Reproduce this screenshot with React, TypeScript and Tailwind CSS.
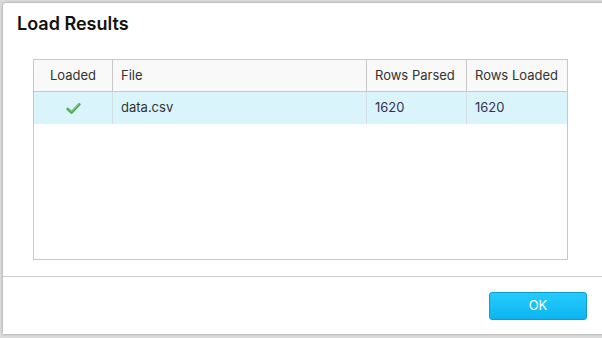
import React from "react";

export default function App() {
  return (
    <div className="w-[602px] h-[338px] bg-[#dcdcdc] pl-[3px] pt-[3px] overflow-hidden" style={{ fontFamily: "Inter, 'Noto Sans', sans-serif" }}>
      <div className="w-[620px] h-[331px] bg-white rounded-tl-[3px] flex flex-col shadow-[0_0_3px_rgba(0,0,0,0.35)]">
        <div className="h-[40px] pl-[14px] pt-[10px] text-[18px] font-semibold text-[#111] leading-[22px]">Load Results</div>
        <div className="pl-[30px] pt-[16px]">
          <div className="w-[535px] h-[201px] border border-[#c8c8c8] text-[13px] text-[#333]">
            <div className="flex h-[32px] bg-[#f9f9f9] border-b border-[#c8c8c8]">
              <div className="w-[79px] border-r border-[#c8c8c8] flex items-center justify-center">Loaded</div>
              <div className="w-[254px] border-r border-[#c8c8c8] flex items-center pl-[8px]">File</div>
              <div className="w-[100px] border-r border-[#c8c8c8] flex items-center pl-[8px]">Rows Parsed</div>
              <div className="flex-1 flex items-center pl-[8px]">Rows Loaded</div>
            </div>
            <div className="flex h-[32px] bg-[#d9f5fb]">
              <div className="w-[79px] border-r border-[#cfdfe3] flex items-center justify-center">
                <svg width="15" height="13" viewBox="0 0 15 13">
                  <path d="M1.8 7 L5.5 10.6 L13.2 2.4" fill="none" stroke="#55a855" strokeWidth="2.8" strokeLinejoin="round" strokeLinecap="round" />
                  <path d="M2.2 6.6 L5.5 9.8 L12.8 2.1" fill="none" stroke="#7cc97c" strokeWidth="1" strokeLinejoin="round" strokeLinecap="round" />
                </svg>
              </div>
              <div className="w-[254px] border-r border-[#cfdfe3] flex items-center pl-[8px]">data.csv</div>
              <div className="w-[100px] border-r border-[#cfdfe3] flex items-center pl-[8px] text-[#3b2f52]">1620</div>
              <div className="flex-1 flex items-center pl-[8px] text-[#3b2f52]">1620</div>
            </div>
          </div>
        </div>
        <div className="mt-[16px] border-t border-[#cccccc] flex justify-start pl-[486px] pt-[15px]">
          <button className="w-[98px] h-[28px] rounded-[3px] border border-[#0b9ed0] bg-gradient-to-b from-[#25cbfc] to-[#0ab5f0] text-white text-[13px] flex items-center justify-center">OK</button>
        </div>
      </div>
    </div>
  );
}
